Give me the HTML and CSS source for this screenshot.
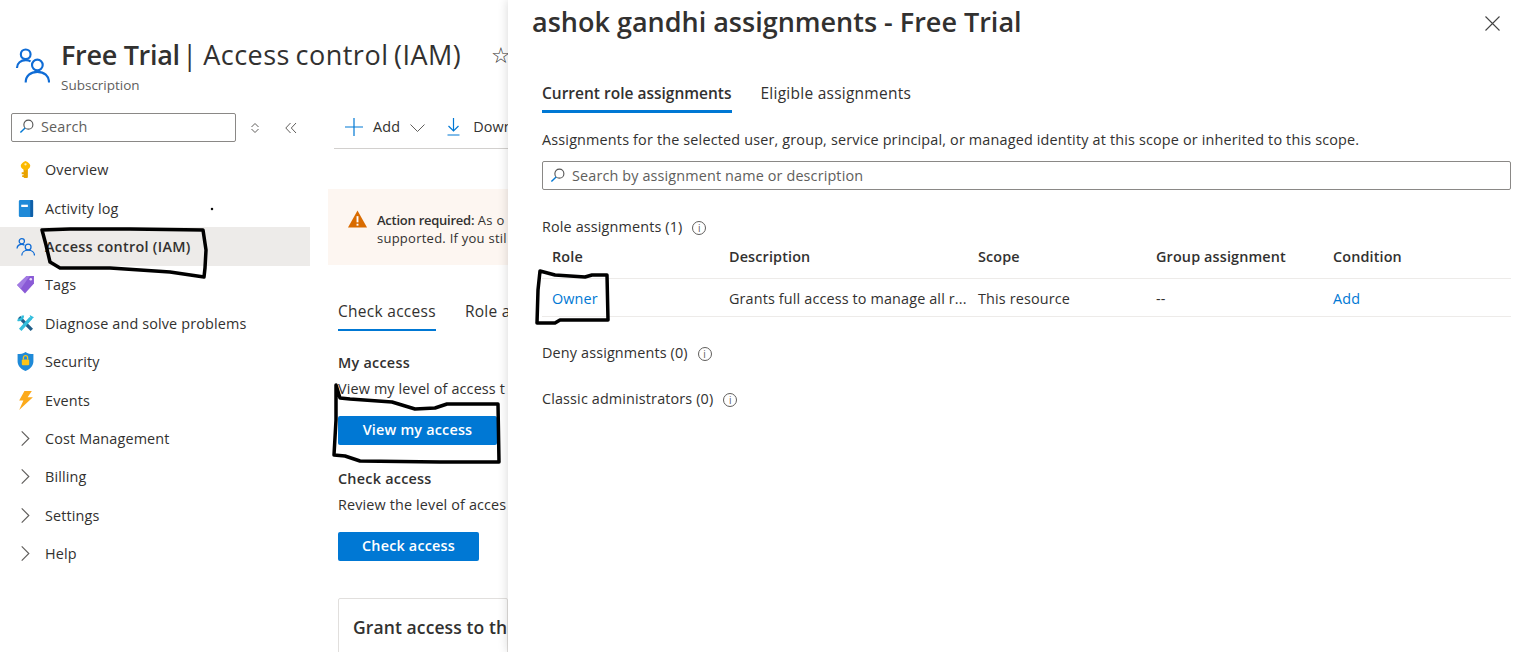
FILE: index.html
```html
<!DOCTYPE html>
<html lang="en">
<head>
  <meta charset="UTF-8">
  <title>Free Trial - Access control (IAM)</title>
  <link rel="stylesheet" href="styles.css">
</head>
<body>

  <div class="blade">
    <header class="blade-header">
      <svg class="people-icon" viewBox="0 0 36 36" fill="none" stroke="#0f6cd6" stroke-width="2.2">
        <circle cx="11" cy="7" r="5"/>
        <path d="M2 21c0-5 4-8 9-8 2 0 4 .5 5 1.500"/>
        <circle cx="23" cy="18" r="5.500"/>
        <path d="M11 36c0-7 5-11 12-11s12 4 12 11"/>
      </svg>
      <div>
        <h1 class="blade-title"><span class="semi">Free Trial</span> | Access control (IAM)</h1>
        <div class="blade-sub">Subscription</div>
      </div>
      <span class="star">☆</span>
    </header>

    <div class="blade-body">
      <aside class="sidebar">
        <div class="side-tools">
          <div class="search-box side-search">
            <svg class="search-icon" viewBox="0 0 16 16" fill="none" stroke-width="1.200"><circle cx="10" cy="6" r="4.800" stroke="#555"/><path d="M6.500 9.500L1.500 14.500" stroke="#0078d4" stroke-width="1.500"/></svg>
            <span>Search</span>
          </div>
          <svg class="updown" viewBox="0 0 10 12" fill="none" stroke="#605e5c"><path d="M1.500 5L5 1.500 8.500 5M1.500 7L5 10.500 8.500 7"/></svg>
          <svg class="collapse" viewBox="0 0 12 12" fill="none" stroke="#605e5c"><path d="M5.500 1L.8 6l4.700 5M11 1L6.300 6l4.700 5"/></svg>
        </div>

        <nav class="side-nav">
          <a class="side-item">
            <svg class="side-icon" viewBox="0 0 20 20"><rect x="8" y="8" width="4.500" height="11" rx="1" fill="#e8a200"/><path d="M6 13h3v2H6zM6.500 16h2.500v2H6.500z" fill="#e8a200"/><path d="M10 1c3 1.500 5 3 5 5s-2 4-5 5c-3-1-5-3-5-5s2-3.500 5-5z" fill="#fcb900"/><circle cx="10" cy="4.500" r="1.200" fill="#fff0b8"/></svg>
            Overview
          </a>
          <a class="side-item">
            <svg class="side-icon" viewBox="0 0 20 20"><rect x="3" y="1" width="15" height="18" rx="1.500" fill="#1f8ad8"/><rect x="15" y="1" width="3" height="18" rx="1" fill="#0f5fa8"/><rect x="5.500" y="6" width="7" height="2.400" fill="#fff"/></svg>
            Activity log
          </a>
          <a class="side-item active">
            <svg class="side-icon" viewBox="0 0 36 36" fill="none" stroke="#0f6cd6" stroke-width="2.400"><circle cx="11" cy="8" r="5"/><path d="M2 22c0-5 4-8 9-8 2 0 4 .5 5 1.500"/><circle cx="23" cy="19" r="5.500"/><path d="M11 35c0-6 5-10 12-10s12 4 12 10"/></svg>
            Access control (IAM)
          </a>
          <a class="side-item">
            <svg class="side-icon" viewBox="0 0 18 18"><path d="M1 9.500L10 1h7v7l-8.500 9.500z" fill="#8a5ad6"/><path d="M1 9.500L10 1h3L4.500 13z" fill="#a27be3"/><circle cx="14" cy="4" r="1.200" fill="#e8dcfa"/></svg>
            Tags
          </a>
          <a class="side-item">
            <svg class="side-icon" viewBox="0 0 18 18" fill="none"><path d="M3 3l12 12" stroke="#1f5f8a" stroke-width="3.200"/><path d="M4 15L14 4" stroke="#32bedd" stroke-width="3.200"/><path d="M1.500 5.500a4 4 0 0 0 5-4" stroke="#32bedd" stroke-width="2.400"/><path d="M13 1l4 2-3 3z" fill="#32bedd"/></svg>
            Diagnose and solve problems
          </a>
          <a class="side-item">
            <svg class="side-icon" viewBox="0 0 18 18"><path d="M9 0c2 1.500 4.500 2 7.500 2v7c0 4-3.500 7.500-7.500 9-4-1.500-7.500-5-7.500-9V2C4.500 2 7 1.500 9 0z" fill="#1f8ad8"/><rect x="5.500" y="7" width="7" height="5.500" rx="1" fill="#fcc419"/><path d="M7 7V5.500a2 2 0 0 1 4 0V7" fill="none" stroke="#fcc419" stroke-width="1.200"/></svg>
            Security
          </a>
          <a class="side-item">
            <svg class="side-icon" viewBox="0 0 18 18"><path d="M8 0h7l-4 6h5L3 18l4-9H3z" fill="#fcaa1b"/></svg>
            Events
          </a>
          <a class="side-item">
            <svg class="side-icon" viewBox="0 0 20 20" fill="none" stroke="#605e5c" stroke-width="1.200"><path d="M6 2.500L13.500 10 6 17.500"/></svg>
            Cost Management
          </a>
          <a class="side-item">
            <svg class="side-icon" viewBox="0 0 20 20" fill="none" stroke="#605e5c" stroke-width="1.200"><path d="M6 2.500L13.500 10 6 17.500"/></svg>
            Billing
          </a>
          <a class="side-item">
            <svg class="side-icon" viewBox="0 0 20 20" fill="none" stroke="#605e5c" stroke-width="1.200"><path d="M6 2.500L13.500 10 6 17.500"/></svg>
            Settings
          </a>
          <a class="side-item">
            <svg class="side-icon" viewBox="0 0 20 20" fill="none" stroke="#605e5c" stroke-width="1.200"><path d="M6 2.500L13.500 10 6 17.500"/></svg>
            Help
          </a>
        </nav>
      </aside>

      <main class="content">
        <div class="toolbar">
          <svg class="tool-plus" viewBox="0 0 18 18" fill="none" stroke="#0078d4" stroke-width="1.200"><path d="M9 0v18M0 9h18"/></svg>
          <span class="tool-label">Add</span>
          <svg class="tool-chevron" viewBox="0 0 15 8" fill="none" stroke="#605e5c" stroke-width="1"><path d="M.5 .5L7.500 7.500 14.500 .5"/></svg>
          <svg class="tool-down" viewBox="0 0 12 18" fill="none" stroke="#0078d4" stroke-width="1.200"><path d="M6 0v13M1 8l5 5 5-5M0 17h12"/></svg>
          <span class="tool-label">Down</span>
        </div>

        <div class="banner">
          <svg class="warn-icon" viewBox="0 0 20 18"><path d="M10 0l10 18H0z" fill="#d96b00"/><rect x="9" y="6" width="2" height="6.500" fill="#fff"/><rect x="9" y="14" width="2" height="2" fill="#fff"/></svg>
          <p class="banner-text"><b>Action required:</b> As o<br>supported. If you stil</p>
        </div>

        <div class="tabs-left">
          <span class="tab-left selected">Check access</span>
          <span class="tab-left">Role a</span>
        </div>

        <h3 class="sub-head head-my">My access</h3>
        <p class="sub-text">View my level of access t</p>
        <button class="primary-btn btn-view">View my access</button>

        <h3 class="sub-head head-check">Check access</h3>
        <p class="sub-text">Review the level of acces</p>
        <button class="primary-btn btn-check">Check access</button>

        <div class="grant-card">Grant access to th</div>
      </main>
    </div>
  </div>

  <!-- drawer on top of the blade -->
  <section class="drawer">
    <div class="drawer-head">
      <h2 class="drawer-title">ashok gandhi assignments - Free Trial</h2>
      <svg class="close-icon" viewBox="0 0 15 15" fill="none" stroke="#444" stroke-width="1.100"><path d="M.5 .5l14 14M14.500 .5l-14 14"/></svg>
    </div>

    <div class="drawer-tabs">
      <span class="drawer-tab selected">Current role assignments</span>
      <span class="drawer-tab">Eligible assignments</span>
    </div>

    <p class="drawer-desc">Assignments for the selected user, group, service principal, or managed identity at this scope or inherited to this scope.</p>

    <div class="search-box drawer-search">
      <svg class="search-icon" viewBox="0 0 16 16" fill="none" stroke-width="1.200"><circle cx="10" cy="6" r="4.800" stroke="#555"/><path d="M6.500 9.500L1.500 14.500" stroke="#0078d4" stroke-width="1.500"/></svg>
      <span>Search by assignment name or description</span>
    </div>

    <div class="group-label label-role">Role assignments (1) <i class="info">i</i></div>

    <div class="assign-table">
      <div class="assign-row assign-head">
        <span>Role</span><span>Description</span><span>Scope</span><span>Group assignment</span><span>Condition</span>
      </div>
      <div class="assign-row assign-body">
        <a class="link">Owner</a><span>Grants full access to manage all r...</span><span>This resource</span><span>--</span><a class="link">Add</a>
      </div>
    </div>

    <div class="group-label label-deny">Deny assignments (0) <i class="info">i</i></div>
    <div class="group-label label-classic">Classic administrators (0) <i class="info">i</i></div>
  </section>

  <!-- pen marks drawn over the screenshot -->
  <svg class="scribbles" viewBox="0 0 1525 652" fill="none" stroke="#000" stroke-width="3.500" stroke-linejoin="round" stroke-linecap="round">
    <path d="M42 230L70 229 130 229 203 230 206 250 205 268 204 277 170 272 110 268 60 268 50 262 46 245z"/>
    <path d="M336 385L340 398 350 399 392 402 415 409 435 408 447 404 498 404 499 462 440 462 360 461 345 456 334 455 336 420z"/>
    <path d="M540 271L555 275 585 277 592 275 607 275 608 320 560 320 555 323 537 323 538 290z"/>
    <circle cx="212" cy="209" r=".5" stroke-width="1.500"/>
  </svg>

</body>
</html>
```

FILE: styles.css
```css
* {
  box-sizing: border-box;
}

html, body {
  height: 100%;
}

body {
  margin: 0;
  background-color: #fff;
  color: #323130;
  font-family: "Open Sans", "Noto Sans", sans-serif;
  font-size: 14.4px;
  letter-spacing: 0.14px;
  overflow: hidden;
  position: relative;
}

/* left blade */
.blade {
  width: 508px;
  height: 100%;
  overflow: hidden;
}

.blade-header {
  display: flex;
  align-items: flex-start;
  height: 113px;
  padding: 37px 0 0 15px;
  white-space: nowrap;
}

.people-icon {
  width: 35px;
  height: 36px;
  margin: 10px 11px 0 0;
  flex: none;
}

.blade-title {
  margin: 0;
  font-size: 27px;
  font-weight: 400;
  line-height: 36px;
  letter-spacing: 0.5px;
  word-spacing: -2px;
}

.semi {
  font-weight: 600;
  letter-spacing: -0.3px;
  word-spacing: 0;
  margin-right: -3px;
}

.blade-sub {
  font-size: 13.500px;
  line-height: 20px;
  margin-top: 2px;
  letter-spacing: 0;
  word-spacing: 0;
  color: #605e5c;
}

.star {
  margin: 2px 0 0 30px;
  font-size: 22px;
  line-height: 30px;
}

.blade-body {
  display: flex;
}

.sidebar {
  width: 328px;
  flex: none;
}

.side-tools {
  display: flex;
  align-items: center;
  padding-left: 11px;
}

.search-box {
  display: flex;
  align-items: center;
  border: 1px solid #8a8886;
  border-radius: 2px;
  color: #605e5c;
  background: #fff;
}

.side-search {
  width: 225px;
  height: 29px;
  padding: 0 0 2px 7px;
}

.search-icon {
  width: 15px;
  height: 15px;
  margin-right: 7px;
  flex: none;
}

.updown {
  width: 10px;
  height: 12px;
  margin-left: 14px;
}

.collapse {
  width: 12px;
  height: 12px;
  margin-left: 25px;
}

.side-nav {
  margin-top: 8.600px;
  width: 310px;
}

.side-item {
  display: flex;
  align-items: center;
  height: 38.400px;
  padding-left: 16px;
  white-space: nowrap;
}

.side-item.active {
  background-color: #edebe9;
  font-weight: 600;
  letter-spacing: 0.3px;
}

.side-icon {
  width: 19px;
  height: 19px;
  margin-right: 10px;
  flex: none;
}

/* right of the menu, cut off by the drawer */
.content {
  flex: 1;
  min-width: 0;
  white-space: nowrap;
  overflow: hidden;
}

.toolbar {
  display: flex;
  align-items: center;
  height: 36px;
  margin-left: 6px;
  padding: 0 0 9px 11px;
  border-bottom: 1px solid #d2d0ce;
}

.tool-plus {
  width: 18px;
  height: 18px;
  margin: 2px 10px 0 0;
  flex: none;
}

.tool-chevron {
  width: 15px;
  height: 8px;
  margin: 4px 22px 0 10px;
  flex: none;
}

.tool-down {
  width: 13px;
  height: 18px;
  margin: 2px 13px 0 0;
  flex: none;
}

.banner {
  display: flex;
  height: 76px;
  margin-top: 40px;
  padding: 22px 0 0 20px;
  background-color: #fdf6f1;
}

.warn-icon {
  width: 19px;
  height: 18px;
  margin: -1px 10px 0 0;
  flex: none;
}

.banner-text {
  margin: 0;
  font-size: 13px;
  line-height: 18px;
  letter-spacing: 0.25px;
}

.banner-text b {
  font-weight: 600;
  letter-spacing: -0.25px;
}

.tabs-left {
  display: flex;
  gap: 29px;
  margin: 34px 0 0 10px;
  font-size: 15.500px;
  letter-spacing: 0.28px;
}

.tab-left {
  height: 32px;
  line-height: 24px;
}

.tab-left.selected {
  border-bottom: 2px solid #0078d4;
}

.sub-head {
  margin: 0 0 0 10px;
  font-size: 14.400px;
  font-weight: 600;
  line-height: 20px;
  letter-spacing: 0.25px;
}

.head-my {
  margin-top: 22px;
}

.head-check {
  margin-top: 24px;
}

.sub-text {
  margin: 6px 0 0 10px;
  line-height: 20px;
}

.primary-btn {
  display: block;
  height: 29px;
  margin: 17px 0 0 10px;
  padding: 0 0 3px;
  border: 0;
  border-radius: 2px;
  background-color: #0078d4;
  color: #fff;
  font-family: inherit;
  font-size: 14.400px;
  font-weight: 600;
  letter-spacing: 0.2px;
  text-align: center;
}

.btn-view {
  width: 159px;
}

.btn-check {
  width: 141px;
}

.grant-card {
  height: 80px;
  margin: 37px 0 0 10px;
  padding: 15px 0 0 14px;
  border: 1px solid #e1dfdd;
  border-radius: 2px;
  font-size: 17.500px;
  font-weight: 600;
  line-height: 26px;
  letter-spacing: 0.1px;
}

/* drawer */
.drawer {
  position: absolute;
  top: 0;
  left: 508px;
  right: 0;
  bottom: 0;
  padding: 0 14px 0 34px;
  background-color: #fff;
  box-shadow: 0 0 10px rgba(0, 0, 0, 0.16);
}

.drawer-head {
  display: flex;
  justify-content: space-between;
  align-items: center;
  height: 44px;
  margin-left: -10px;
}

.drawer-title {
  margin: 0;
  font-size: 27px;
  font-weight: 600;
  line-height: 44px;
  letter-spacing: 0;
}

.close-icon {
  width: 15px;
  height: 15px;
  margin: 2px 11px 0 0;
}

.drawer-tabs {
  display: flex;
  gap: 29px;
  margin-top: 37px;
  font-size: 15.500px;
  letter-spacing: 0.25px;
}

.drawer-tab {
  height: 32px;
  line-height: 24px;
}

.drawer-tab.selected {
  font-weight: 600;
  letter-spacing: 0;
  border-bottom: 3px solid #0078d4;
}

.drawer-desc {
  margin: 17px 0 0;
  line-height: 20px;
  letter-spacing: 0.17px;
}

.drawer-search {
  height: 29px;
  margin-top: 11px;
  padding-left: 7px;
}

.group-label {
  line-height: 20px;
}

.label-role {
  margin-top: 27px;
}

.label-deny {
  margin-top: 26px;
}

.label-classic {
  margin-top: 26px;
}

.info {
  display: inline-flex;
  align-items: center;
  justify-content: center;
  width: 14px;
  height: 14px;
  margin-left: 6px;
  border: 1px solid #605e5c;
  border-radius: 50%;
  color: #605e5c;
  font-size: 10px;
  font-style: normal;
}

.assign-row {
  display: grid;
  grid-template-columns: 177px 249px 178px 177px 1fr;
  align-items: center;
  height: 38px;
  padding-left: 10px;
  border-bottom: 1px solid #edebe9;
}

.assign-head {
  height: 42px;
  padding-bottom: 2px;
  font-weight: 600;
}

.assign-body {
  padding-top: 2px;
}

.link {
  color: #0078d4;
}

.scribbles {
  position: absolute;
  top: 0;
  left: 0;
  width: 1525px;
  height: 652px;
  pointer-events: none;
}
```
